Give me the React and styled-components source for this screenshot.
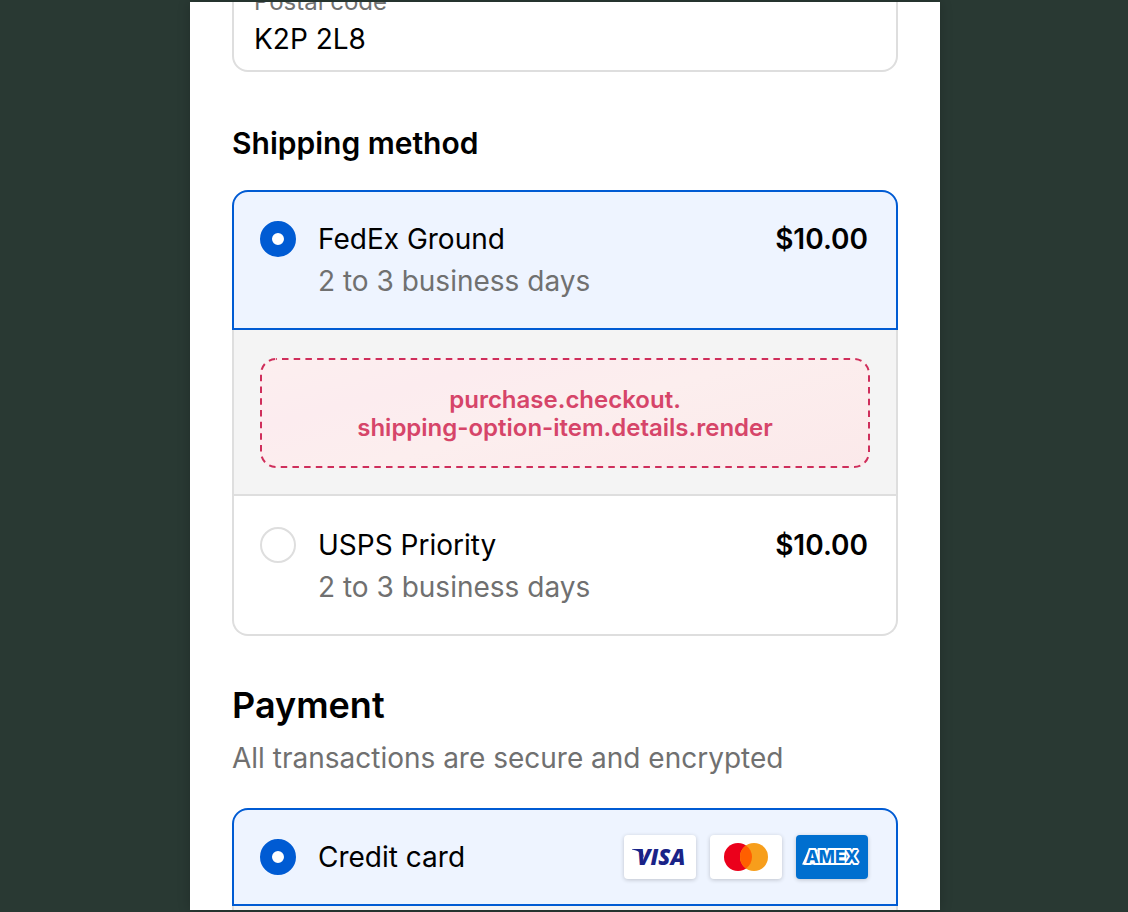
import React, { useState } from "react";

import styled, { createGlobalStyle } from "styled-components";

const GlobalStyle = createGlobalStyle`
  * {
    box-sizing: border-box;
  }
  body {
    margin: 0;
    background-color: #293933;
    color: #000000;
    font-family: Inter, "Liberation Sans", sans-serif;
    font-size: 28px;
    line-height: 42px;
  }
`;

const Page = styled.div`
  display: flex;
  justify-content: center;
  height: 100vh;
  padding: 2px 0 2px 2px;
  overflow: hidden;
`;

const Sheet = styled.main`
  width: 100%;
  max-width: 750px;
  padding: 0 42px;
  overflow: hidden;
  background-color: #ffffff;
  box-shadow: 0 0 12px rgba(0, 0, 0, 0.2);
`;

const Field = styled.div`
  display: flex;
  flex-direction: column;
  margin-top: -40px;
  padding: 24px 20px 14px;
  border: 2px solid #dedede;
  border-radius: 16px;
  label {
    color: #707070;
    font-size: 24px;
    line-height: 28px;
  }
  input {
    height: 34px;
    margin-top: 6px;
    padding: 0;
    border: 0;
    outline: 0;
    background: transparent;
    color: inherit;
    font: inherit;
  }
`;

const Section = styled.section`
  display: flex;
  flex-direction: column;
`;

const Title = styled.h2`
  margin: 50px 0 26px;
  font-size: 30px;
  font-weight: 600;
  line-height: 42px;
`;

const LargeTitle = styled.h1`
  margin: 45px 0 8px;
  font-size: 36px;
  font-weight: 600;
  line-height: 48px;
`;

const Intro = styled.p`
  margin: 0 0 29px;
  color: #707070;
`;

const Option = styled.div`
  display: flex;
  gap: 22px;
  padding: ${(props) => (props.$last ? "28px 28px 26px 26px" : "26px 28px 26px 26px")};
  border: 2px solid ${(props) => (props.$selected ? "#005bd3" : "#dedede")};
  border-top-width: ${(props) => (props.$last ? "0" : "2px")};
  border-radius: ${(props) => (props.$last ? "0 0 16px 16px" : "16px 16px 0 0")};
  background-color: ${(props) => (props.$selected ? "#eef4ff" : "#ffffff")};
  label {
    flex: 1;
  }
`;

const Radio = styled.input`
  appearance: none;
  flex: none;
  width: 36px;
  height: 36px;
  margin: 3px 0;
  border: 2px solid #dedede;
  border-radius: 50%;
  background-color: #ffffff;
  &:checked {
    border: 12px solid #005bd3;
  }
`;

const Delivery = styled.span`
  display: block;
  color: #707070;
`;

const Price = styled.span`
  font-weight: 600;
`;

const Details = styled.div`
  min-height: 28px;
  padding: 28px 26px 26px;
  border: solid #dedede;
  border-width: 0 2px 2px;
  background-color: #f4f4f4;
`;

const Target = styled.div`
  position: relative;
  padding: 28px 26px 26px;
  border-radius: 16px;
  background: linear-gradient(165deg, #fcefef, #fcecef 25%, #fceeee 50%, #fbe9ea);
  color: #d64569;
  font-size: 24px;
  font-weight: 600;
  line-height: 28px;
  text-align: center;
`;

const Outline = styled.svg`
  position: absolute;
  inset: 0;
  width: 100%;
  height: 100%;
  padding: 1px;
  overflow: visible;
`;

const Cards = styled.div`
  display: flex;
  align-items: center;
  gap: 14px;
  margin: -1px 0;
`;

const Card = styled.svg`
  width: 72px;
  height: 44px;
  border-radius: 4px;
  background-color: ${(props) => props.$color || "#ffffff"};
  box-shadow: 0 1px 4px rgba(0, 0, 0, 0.2);
`;

function Visa() {
  return (
    <Card viewBox="0 0 72 44" role="img" aria-label="Visa">
      <path d="M8 14h7.5c2 0 2.8 1 3.2 2.8l1.3 6C17.5 18 14 15.5 8 14.6z" fill="#1a2387" />
      <text
        x="13"
        y="30"
        fill="#1a2387"
        fontFamily="Open Sans, sans-serif"
        fontSize="22"
        fontStyle="italic"
        fontWeight="800"
      >
        VISA
      </text>
    </Card>
  );
}

function Mastercard() {
  return (
    <Card viewBox="0 0 72 44" role="img" aria-label="Mastercard">
      <circle cx="28" cy="22" r="14" fill="#eb001b" />
      <circle cx="44" cy="22" r="14" fill="#f79e1b" />
      <path d="M36 10.5a14 14 0 0 1 0 23a14 14 0 0 1 0-23z" fill="#ff5f00" />
    </Card>
  );
}

function Amex() {
  return (
    <Card viewBox="0 0 72 44" role="img" aria-label="Amex" $color="#006fcf">
      <path d="M6 29.500L13 14.500H22L18 29.500z" fill="#ffffff" />
      <text
        x="36"
        y="28"
        fill="#006fcf"
        stroke="#ffffff"
        strokeWidth="4"
        strokeLinejoin="miter"
        strokeMiterlimit="2"
        paintOrder="stroke"
        textAnchor="middle"
        fontFamily="Inter, sans-serif"
        fontSize="17"
        fontWeight="800"
      >
        AMEX
      </text>
    </Card>
  );
}

export default function App() {
  const [postal, setPostal] = useState("K2P 2L8");
  const [shipping, setShipping] = useState("fedex");

  return (
    <Page>
      <GlobalStyle />
      <Sheet>
        <Field>
          <label htmlFor="postal">Postal code</label>
          <input
            id="postal"
            value={postal}
            onChange={(e) => setPostal(e.target.value)}
          />
        </Field>
        <Section>
          <Title>Shipping method</Title>
          <Option $selected={shipping === "fedex"}>
            <Radio
              type="radio"
              id="fedex"
              name="shipping"
              checked={shipping === "fedex"}
              onChange={() => setShipping("fedex")}
            />
            <label htmlFor="fedex">
              FedEx Ground
              <Delivery>2 to 3 business days</Delivery>
            </label>
            <Price>$10.00</Price>
          </Option>
          <Details>
            <Target>
              <Outline aria-hidden="true">
                <rect
                  width="100%"
                  height="100%"
                  rx="15"
                  fill="none"
                  stroke="#cf2e5b"
                  strokeWidth="2"
                  strokeDasharray="6.5 5.2"
                  strokeDashoffset="-6"
                />
              </Outline>
              purchase.checkout.
              <br />
              shipping-option-item.details.render
            </Target>
          </Details>
          <Option $last $selected={shipping === "usps"}>
            <Radio
              type="radio"
              id="usps"
              name="shipping"
              checked={shipping === "usps"}
              onChange={() => setShipping("usps")}
            />
            <label htmlFor="usps">
              USPS Priority
              <Delivery>2 to 3 business days</Delivery>
            </label>
            <Price>$10.00</Price>
          </Option>
        </Section>
        <Section>
          <LargeTitle>Payment</LargeTitle>
          <Intro>All transactions are secure and encrypted</Intro>
          <Option $selected>
            <Radio type="radio" id="card" name="payment" defaultChecked />
            <label htmlFor="card">Credit card</label>
            <Cards>
              <Visa />
              <Mastercard />
              <Amex />
            </Cards>
          </Option>
          <Details />
        </Section>
      </Sheet>
    </Page>
  );
}
